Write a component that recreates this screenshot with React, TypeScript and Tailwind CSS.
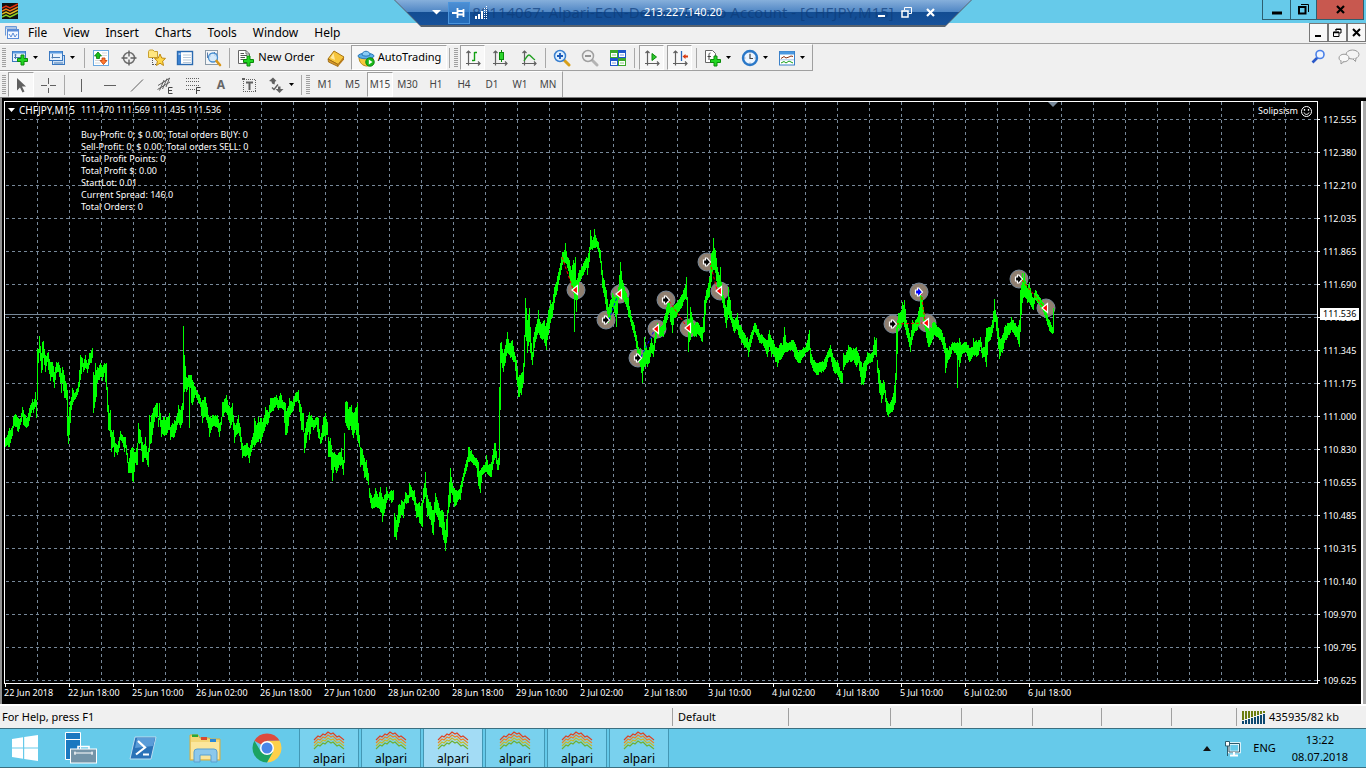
import React from 'react';

/* ------------------------------------------------------------------ */
/* Market data: [x, high, low] key samples, one bar per pixel between  */
/* ------------------------------------------------------------------ */

const SAMPLES = `5,438,447 7,435,445 9,428,447 12,426,436 13,417,428 15,414,427 18,418,432 20,418,425 22,407,417 23,410,425 26,418,428 28,413,426 30,405,417 32,399,410 33,402,413 35,392,407 36,400,418 37,349,400 38,349,363 39,336,353 41,353,373 42,342,370 43,341,358 45,355,372 47,353,362 48,352,370 50,362,381 52,362,377 54,372,388 56,362,373 58,362,372 60,368,383 61,373,393 62,367,383 64,375,398 66,383,400 67,390,436 68,417,444 69,407,435 71,397,410 72,388,405 74,393,400 77,388,395 78,382,392 80,355,380 82,358,367 83,363,372 85,355,368 87,363,373 89,353,365 91,350,363 92,348,358 93,372,413 95,363,402 96,370,397 97,367,383 100,363,377 102,367,381 104,363,373 106,363,390 107,387,412 108,405,430 110,410,437 111,430,452 113,430,447 114,437,457 115,443,452 117,445,455 119,437,448 120,431,440 122,435,443 124,437,452 125,437,448 127,453,463 128,462,473 130,450,473 132,447,481 133,448,482 135,452,463 137,443,465 138,423,443 140,430,443 142,442,462 143,445,462 145,437,458 147,452,465 148,448,467 149,415,452 151,415,443 153,408,428 155,405,417 157,403,417 158,418,427 159,403,420 161,420,437 163,417,435 166,417,435 168,417,430 169,413,430 170,427,440 172,423,437 174,420,437 176,417,430 178,405,423 180,410,428 182,403,423 183,326,410 184,355,392 186,377,392 188,375,387 189,375,428 190,375,388 191,375,403 192,380,405 195,387,395 197,392,400 200,398,407 202,400,423 204,397,417 205,397,417 207,407,423 209,417,437 212,415,427 215,415,427 217,415,428 219,423,437 221,417,425 222,402,417 225,398,412 226,395,413 228,405,420 230,408,428 232,403,422 234,423,443 236,423,435 238,415,433 240,427,442 242,443,458 245,445,457 247,443,455 249,448,463 251,440,452 253,433,445 254,418,447 257,423,442 258,417,442 260,418,443 263,418,433 265,407,427 268,412,423 270,398,413 273,398,411 276,395,405 278,400,410 280,393,408 283,402,410 285,403,435 287,408,433 289,398,417 292,402,412 295,393,402 298,390,403 299,400,412 301,407,430 303,413,432 304,433,453 306,422,443 308,415,432 309,412,440 311,415,427 313,420,430 316,417,425 318,418,438 320,437,444 321,433,443 323,417,437 325,413,438 327,422,435 328,437,457 330,438,457 332,452,481 334,452,467 336,455,473 339,452,465 341,448,465 343,460,475 344,433,463 345,402,423 347,402,428 349,407,430 351,405,430 353,413,438 355,408,430 357,403,440 359,435,447 360,447,467 362,450,465 364,458,478 366,460,480 368,473,485 369,488,498 371,495,508 373,497,508 375,488,507 378,497,508 380,487,512 382,497,522 384,495,513 386,487,503 388,494,498 391,490,503 393,490,500 394,513,537 396,520,540 398,505,527 401,500,515 403,502,518 405,492,503 408,495,503 409,483,498 411,487,497 414,490,505 416,503,518 418,503,517 419,502,523 422,500,527 423,488,503 425,472,497 427,495,517 430,502,520 432,510,533 433,510,535 435,493,513 437,500,517 439,508,527 441,510,528 443,512,540 445,530,551 447,510,537 448,495,513 450,468,503 451,477,493 454,488,507 456,490,505 458,490,500 460,485,500 462,477,487 464,468,477 467,457,467 468,447,462 471,450,462 473,455,465 476,458,468 478,462,486 480,470,493 482,467,475 484,465,473 486,455,472 488,465,475 491,462,477 492,455,470 494,443,460 495,443,458 497,460,470 498,458,470 499,387,465 500,343,410 501,342,363 503,353,372 505,345,363 507,332,353 509,343,355 512,340,360 514,352,362 516,360,380 518,377,397 521,373,395 523,363,383 524,335,367 525,298,337 527,320,353 529,308,342 530,327,353 532,352,365 533,337,357 535,327,342 538,310,333 540,322,338 542,323,340 544,320,343 546,323,350 548,310,335 550,300,323 552,302,317 554,287,303 556,282,295 558,272,285 560,263,275 562,252,265 563,252,262 565,243,263 567,257,268 569,260,278 571,270,287 573,260,293 574,263,332 575,257,300 576,280,312 578,273,292 579,270,282 581,267,278 583,263,275 586,257,268 587,258,275 589,247,262 590,230,250 592,240,250 594,229,248 596,238,247 598,242,252 600,250,263 602,270,288 604,280,297 606,290,310 608,307,323 610,300,320 612,293,307 615,297,317 616,293,327 618,287,300 619,275,298 620,262,292 622,280,298 624,287,302 627,297,310 628,298,317 630,310,322 632,320,330 634,325,337 636,335,348 638,347,360 640,348,367 642,358,383 644,337,367 647,350,367 649,347,363 651,338,353 653,345,357 655,330,343 657,323,333 660,327,337 663,320,337 665,313,330 667,302,320 669,300,313 670,308,322 672,307,333 674,305,318 676,303,317 678,300,312 681,295,308 683,290,302 684,288,300 686,277,300 687,297,327 688,320,352 690,307,340 692,317,333 694,325,337 696,322,337 698,323,335 700,327,338 702,327,342 704,300,332 706,290,303 708,283,298 709,277,297 711,253,282 713,238,270 715,250,273 717,267,287 719,275,292 720,267,292 722,290,303 724,298,317 726,307,328 728,287,315 730,300,320 732,317,327 734,320,333 737,313,330 738,320,335 741,327,343 744,333,348 747,337,350 748,342,357 751,332,343 754,323,332 756,325,335 759,333,343 762,335,343 764,338,348 767,340,357 769,330,347 771,338,357 773,340,355 775,347,362 777,348,367 780,343,360 782,345,357 784,327,353 786,342,352 789,342,350 792,340,350 794,342,357 797,350,362 800,350,363 803,347,357 805,347,353 807,340,352 809,330,350 810,348,363 812,357,368 815,362,373 817,363,375 820,362,372 823,362,372 826,355,367 828,350,358 830,345,357 832,353,367 834,358,373 837,360,375 839,367,380 842,373,383 843,353,370 845,355,365 848,345,362 851,348,362 853,348,360 856,347,367 858,353,363 861,362,385 863,363,385 865,360,378 867,352,365 869,353,363 872,352,362 874,337,355 876,338,357 877,360,373 879,370,393 881,383,403 883,380,395 884,382,393 886,398,412 888,403,417 891,400,412 893,393,410 895,373,403 896,327,380 898,313,328 900,312,328 902,302,323 904,300,327 906,320,335 908,328,342 910,337,352 912,320,340 914,323,333 917,317,330 919,307,325 920,290,317 922,297,317 924,313,327 926,323,338 928,328,347 930,327,345 932,323,340 934,322,335 937,327,337 939,328,340 941,330,342 944,337,353 945,343,373 947,348,363 950,347,357 952,342,350 955,343,353 956,343,355 957,342,388 958,343,360 959,338,367 961,345,357 963,343,353 966,342,353 969,348,362 972,347,357 973,338,355 976,340,357 978,340,355 980,337,347 982,348,358 984,347,357 986,328,367 988,327,342 990,327,340 992,320,333 994,299,322 995,310,322 997,317,338 999,337,359 1002,335,353 1004,327,343 1007,323,338 1009,323,335 1011,317,330 1013,320,333 1015,323,337 1017,327,340 1019,320,347 1020,290,332 1022,273,303 1024,273,297 1027,288,303 1029,283,303 1031,293,307 1033,298,310 1035,290,300 1038,295,303 1040,298,307 1043,303,312 1045,310,318 1047,315,325 1050,322,332 1052,327,334 1053,308,333`
  .split(/\s+/)
  .map((s) => s.split(',').map(Number));

function buildBars(): string {
  let seed = 17;
  const rnd = () => {
    seed = (seed * 1103515245 + 12345) % 2147483648;
    return seed / 2147483648;
  };
  const out: string[] = [];
  for (let i = 0; i < SAMPLES.length; i++) {
    const [x, hi, lo] = SAMPLES[i];
    out.push(`M${x} ${hi}V${lo}`);
    const next = SAMPLES[i + 1];
    if (!next) break;
    for (let px = x + 1; px < next[0]; px++) {
      const t = (px - x) / (next[0] - x);
      const h = hi + (next[1] - hi) * t;
      const l = lo + (next[2] - lo) * t;
      const span = l - h;
      const top = Math.round(h - 1 + rnd() * span * 0.25);
      const bottom = Math.round(l + 1 - rnd() * span * 0.2);
      out.push(`M${px} ${top}V${bottom}`);
    }
  }
  return out.join('');
}

const BARS = buildBars();

const PRICES = ['112.555', '112.380', '112.210', '112.035', '111.865', '111.690', '111.520', '111.345', '111.175', '111.000', '110.830', '110.655', '110.485', '110.315', '110.140', '109.970', '109.795', '109.625'];
const TIMES = ['22 Jun 2018', '22 Jun 18:00', '25 Jun 10:00', '26 Jun 02:00', '26 Jun 18:00', '27 Jun 10:00', '28 Jun 02:00', '28 Jun 18:00', '29 Jun 10:00', '2 Jul 02:00', '2 Jul 18:00', '3 Jul 10:00', '4 Jul 02:00', '4 Jul 18:00', '5 Jul 10:00', '6 Jul 02:00', '6 Jul 18:00'];
const STATS = ['Buy-Profit: 0; $ 0.00; Total orders BUY: 0', 'Sell-Profit: 0; $ 0.00; Total orders SELL: 0', 'Total Profit Points: 0', 'Total Profit $: 0.00', 'StartLot: 0.01', 'Current Spread: 146.0', 'Total Orders: 0'];

type Kind = 'exit' | 'entry' | 'buy';
const MARKERS: [number, number, Kind][] = [
  [576, 290, 'exit'], [606, 320, 'entry'], [620, 294, 'exit'], [638, 358, 'entry'], [657, 329, 'exit'],
  [666, 300, 'entry'], [689, 328, 'exit'], [707, 262, 'entry'], [720, 291, 'exit'], [893, 324, 'entry'],
  [919, 292, 'buy'], [927, 323, 'exit'], [1019, 279, 'entry'], [1046, 308, 'exit'],
];
const LINKS: [number, number, number, number, string][] = [
  [562, 257, 573, 289, '#f00'], [609, 320, 617, 297, '#00f'], [641, 357, 654, 331, '#00f'], [669, 301, 687, 327, '#f00'],
  [710, 262, 717, 290, '#f00'], [896, 324, 924, 323, '#f00'], [921, 292, 925, 321, '#f00'], [1022, 280, 1043, 306, '#f00'],
];

function Marker({ x, y, kind }: { x: number; y: number; kind: Kind }) {
  return (
    <g transform={`translate(${x} ${y})`}>
      {kind === 'exit' ? (
        <path d="M-4 0L1.500 -4.500V4.500Z" fill="#f00" stroke="#fff" strokeWidth="1.200" />
      ) : (
        <path d="M-3.500 -2H-1.500V-4H0L3.500 0L0 4H-1.500V2H-3.500Z" fill={kind === 'buy' ? '#00f' : '#000'} stroke="#fff" strokeWidth="1.200" />
      )}
    </g>
  );
}

/* Plot coordinates are window pixels; the group shifts them into the frame. */
function Plot() {
  const cols = Array.from({ length: 60 }, (_, i) => 37 + i * 32);
  const rows = Array.from({ length: 30 }, (_, i) => 119 + i * 33);
  return (
    <svg className="block h-full w-full" aria-label="CHFJPY M15 chart">
      <g transform="translate(-5 -102)">
        <g stroke="#778899" strokeDasharray="3 3" shapeRendering="crispEdges">
          {cols.map((x) => (
            <line key={x} x1={x + 0.5} x2={x + 0.5} y1="102" y2="1600" />
          ))}
          {rows.map((y) => (
            <line key={y} x1="6" x2="2600" y1={y + 0.5} y2={y + 0.5} />
          ))}
        </g>
        <path d="M5 314.500H2600" stroke="#778899" shapeRendering="crispEdges" />
        <path d="M1048 102H1058L1053 107Z" fill="#778899" />
        {MARKERS.map(([x, y]) => (
          <circle key={x} cx={x} cy={y} r="9" fill="#8f7f70" stroke="#778899" />
        ))}
        <path d={BARS} transform="translate(0.5 0)" stroke="#0f0" fill="none" shapeRendering="crispEdges" />
        {LINKS.map(([x1, y1, x2, y2, c]) => (
          <line key={x1} x1={x1} y1={y1} x2={x2} y2={y2} stroke={c} strokeDasharray="3 2" />
        ))}
        {MARKERS.map(([x, y, k]) => (
          <Marker key={x} x={x} y={y} kind={k} />
        ))}
      </g>
    </svg>
  );
}

/* ------------------------------- icons ------------------------------ */

function Svg({ w = 18, h = 18, children }: { w?: number; h?: number; children: React.ReactNode }) {
  return (
    <svg width={w} height={h} viewBox={`0 0 ${w} ${h}`} fill="none" aria-hidden="true" className="shrink-0">
      {children}
    </svg>
  );
}

const Plus = ({ x, y }: { x: number; y: number }) => (
  <path d={`M${x + 4} ${y + 0.5}h3v3.5h3.500v3h-3.500v3.500h-3v-3.500h-3.500v-3h3.500z`} fill="#22d622" stroke="#0a8a0a" strokeWidth="1" />
);
const Caret = () => (
  <Svg w={7} h={4}><path d="M1 0H6L3.500 3Z" fill="#000" /></Svg>
);

const NewChart = () => (
  <Svg>
    <rect x="1.500" y="2.500" width="13" height="10" fill="#e8f2fc" stroke="#3a78c0" />
    <path d="M2 3.500H14" stroke="#5a9be0" strokeWidth="2" />
    <path d="M4.500 5V10M3 8.500H12M3.500 6h2" stroke="#4a7ab0" />
    <Plus x={6} y={5.500} />
  </Svg>
);
const Profiles = () => (
  <Svg>
    <rect x="4.500" y="6.500" width="12" height="9" fill="#cfe2f7" stroke="#3a78c0" />
    <rect x="1.500" y="2.500" width="13" height="9" fill="#e8f2fc" stroke="#3a78c0" />
    <path d="M2 3.500H14" stroke="#5a9be0" strokeWidth="2" />
    <path d="M4.500 5V9.500M3.500 8.500H12M6 14h9" stroke="#4a7ab0" />
  </Svg>
);
const MarketWatch = () => (
  <Svg>
    <rect x="1.500" y="1.500" width="15" height="15" fill="#fff" stroke="#6aa8e0" />
    <path d="M10 4H15M10 6.500H15M3 11.500H8M3 14H8" stroke="#d8d8d8" />
    <path d="M6 3L9.500 7H7.500V9.500H4.500V7H2.500Z" fill="#18c018" stroke="#0a7a0a" strokeWidth=".8" />
    <path d="M11.500 15.500L15 11.500H13V9H10V11.500H8Z" fill="#ff7a30" stroke="#c03a00" strokeWidth=".8" />
  </Svg>
);
const Target = () => (
  <Svg>
    <circle cx="9" cy="9" r="5.500" stroke="#707070" strokeWidth="1.500" />
    <path d="M9 1.500V7.500M9 10.500V16.500M1.500 9H7.500M10.500 9H16.500" stroke="#606060" strokeWidth="1.400" />
  </Svg>
);
const Navigator = () => (
  <Svg>
    <path d="M.5 2.500L1.500 1H5L6.500 2.500H9.500V8.500H.5Z" fill="#ffe680" stroke="#c8a030" />
    <path d="M4.500 9V16M5 15.500H9" stroke="#555" strokeDasharray="1 1" />
    <path d="M12 5L13.700 9L17.500 9.400L14.600 12.200L15.500 16.500L12 14.200L8.500 16.500L9.400 12.200L6.500 9.400L10.300 9Z" fill="#ffd84a" stroke="#c08a10" />
  </Svg>
);
const Terminal = () => (
  <Svg>
    <rect x="1.500" y="2.500" width="15" height="13" fill="#fff" stroke="#2a6ab0" strokeWidth="1.400" />
    <rect x="2" y="3" width="3" height="12" fill="#3a80d0" />
    <path d="M7 6H15M7 8.500H15M7 11H15M7 13.500H15" stroke="#b8c8d8" />
    <path d="M2.500 5H4.500" stroke="#fff" />
  </Svg>
);
const Tester = () => (
  <Svg>
    <rect x="1.500" y="1.500" width="12" height="14" fill="#f4f6f8" stroke="#8a9aa8" />
    <path d="M3.500 3.500V9M6.500 4V8M10.500 3V7M12 4V8" stroke="#5a7aa8" />
    <circle cx="9" cy="8.500" r="4.500" fill="#cfe8fb" fillOpacity=".85" stroke="#4a90d0" strokeWidth="1.300" />
    <path d="M12.500 12L16 16" stroke="#d8961a" strokeWidth="2.600" strokeLinecap="round" />
  </Svg>
);
const NewOrder = () => (
  <Svg>
    <path d="M1.500 1.500H9L12.500 5V14.500H1.500Z" fill="#fff" stroke="#666" />
    <path d="M9 1.500V5H12.500" stroke="#666" />
    <path d="M3.500 4.500H7M3.500 6.500H10M3.500 8.500H8M3.500 10.500H7" stroke="#555" />
    <Plus x={6} y={6.500} />
  </Svg>
);
const Book = () => (
  <Svg>
    <path d="M1 10L7 2L17 8L11 15.500Z" fill="#f6c53c" stroke="#a87410" />
    <path d="M1 10L1.500 13L11 17.500V15.500Z" fill="#d8982a" stroke="#96640c" strokeWidth=".8" />
    <path d="M11 15.500L17 8V10.500L11 17.500" fill="#b87a18" />
    <path d="M6.500 4L3.500 9L8 11Z" fill="#ffe9a0" />
  </Svg>
);
const AutoIcon = () => (
  <Svg>
    <path d="M2 8C2 14 6 17 10 17S16 12 16 9Z" fill="#f7c93a" stroke="#b88a18" />
    <ellipse cx="9" cy="7" rx="8" ry="2.800" fill="#5aaee8" stroke="#2a78b8" />
    <path d="M5 6C5 1 13 1 13 6C11 7.500 7 7.500 5 6Z" fill="#8accf5" stroke="#2a78b8" />
    <circle cx="13" cy="13" r="4.300" fill="#18b818" stroke="#0a7a0a" strokeWidth=".8" />
    <path d="M11.800 10.500V15.500L15.500 13Z" fill="#fff" />
  </Svg>
);
const Axes = () => (
  <path d="M4.500 2V16.500M2 14.500H16M2.500 4L4.500 2L6.500 4M14 12.500L16 14.500L14 16.500" stroke="#606060" strokeWidth="1.200" />
);
const BarIcon = () => (
  <Svg><Axes /><path d="M10.500 3V12M10.500 3.500H13M8 11.500H10.500" stroke="#12a012" strokeWidth="1.400" /></Svg>
);
const CandleIcon = () => (
  <Svg><Axes /><path d="M10.500 1V13" stroke="#0a8a0a" /><rect x="8.500" y="3.500" width="4" height="7" fill="#2cd62c" stroke="#0a8a0a" /></Svg>
);
const LineIcon = () => (
  <Svg><Axes /><path d="M4 12C6 9 7.500 6 9 6S12 9 15 11" stroke="#22a022" strokeWidth="1.300" /></Svg>
);
const Zoom = ({ on }: { on: boolean }) => (
  <Svg>
    <path d="M11 11L16 16" stroke={on ? '#d8a01a' : '#b4b4b4'} strokeWidth="3" strokeLinecap="round" />
    <circle cx="7" cy="7" r="5.500" fill={on ? '#dff0ff' : '#f0f0f0'} stroke={on ? '#3a80d0' : '#a0a0a0'} strokeWidth="1.500" />
    <path d={on ? 'M4 7H10M7 4V10' : 'M4 7H10'} stroke={on ? '#1a5ab8' : '#888'} strokeWidth="1.800" />
  </Svg>
);
const Pane = ({ x, y, c }: { x: number; y: number; c: string }) => (
  <g transform={`translate(${x} ${y})`}>
    <rect width="8" height="8" fill={c} />
    <path d="M1 3H7V7H1Z" fill="#fff" />
    <path d="M2 5H6" stroke={c} strokeOpacity=".6" />
  </g>
);
const Tile = () => (
  <Svg>
    <Pane x={1} y={1} c="#3aa82a" />
    <Pane x={9} y={1} c="#1f58cc" />
    <Pane x={1} y={9} c="#1f58cc" />
    <Pane x={9} y={9} c="#3aa82a" />
  </Svg>
);
const ScrollIcon = () => (
  <Svg><Axes /><path d="M9 4.500L13.500 8L9 11.500Z" fill="#2cc82c" stroke="#0a8a0a" /></Svg>
);
const ShiftIcon = () => (
  <Svg><Axes /><path d="M10.500 2V12" stroke="#2a68b8" strokeWidth="1.300" /><path d="M11.500 7.500L14.500 5V6.500H17V8.500H14.500V10Z" fill="#d83a10" /></Svg>
);
const IndicatorIcon = () => (
  <Svg>
    <path d="M1.500 1.500H8.500L11.500 4.500V13.500H1.500Z" fill="#fff" stroke="#666" />
    <path d="M6.500 4C5 4 5 5 5 6V11M3.500 7.500H7" stroke="#444" />
    <Plus x={6} y={6.500} />
  </Svg>
);
const ClockIcon = () => (
  <Svg>
    <circle cx="9" cy="9" r="7" fill="#eef6ff" stroke="#2a78c8" strokeWidth="2.400" />
    <path d="M9 5V9.500H12" stroke="#444" strokeWidth="1.200" />
    <path d="M9 3.500v.8M9 13.700v.8M3.500 9h.8M13.700 9h.8" stroke="#667" />
  </Svg>
);
const TemplateIcon = () => (
  <Svg>
    <rect x="1.500" y="2.500" width="15" height="13.500" fill="#fff" stroke="#3a80c8" />
    <path d="M2 4H16" stroke="#4a98e0" strokeWidth="3" />
    <path d="M3 9.500L6 7.500L8 9L11 8L13 7L15 7.500" stroke="#8a3010" />
    <path d="M3 14L6 12.500L8 14L11 12L15 14" stroke="#18a018" />
    <path d="M2 10.800H16" stroke="#a8c8e8" />
  </Svg>
);

const P = '#606060';
const Arrow = () => (<Svg><path d="M5 2L14 10.500H10L12.500 15.500L10.500 16.500L8 11.500L5 14.500Z" fill={P} /></Svg>);
const Cross = () => (<Svg><path d="M9.500 1.500V7.500M9.500 11.500V17M2 9.500H8M11 9.500H17" stroke={P} shapeRendering="crispEdges" /></Svg>);
const VLine = () => (<Svg><path d="M9.500 3V16" stroke={P} shapeRendering="crispEdges" /></Svg>);
const HLine = () => (<Svg><path d="M4 9.500H16" stroke={P} shapeRendering="crispEdges" /></Svg>);
const Trend = () => (<Svg><path d="M3 15.500L15 3.500" stroke={P} /></Svg>);
const Channel = () => (
  <Svg>
    <path d="M2 9.500L14 2M1.500 13.500L14 6M3.500 14.500L8 4M6.500 13L11 2.500M10 11L13.500 2" stroke={P} />
    <path d="M16.500 11.500H12.500V17.500H16.500M12.500 14.500H16" stroke="#444" />
  </Svg>
);
const Fibo = () => (
  <Svg>
    <path d="M2 2.500H16M2 5.500H16M2 9.500H16M2 13.500H11" stroke={P} strokeDasharray="1 1" shapeRendering="crispEdges" />
    <path d="M16.500 11.500H12.500V18M12.500 14.500H16" stroke="#444" />
  </Svg>
);
const LabelIcon = () => (
  <Svg>
    <rect x="3.500" y="3.500" width="12" height="12" stroke={P} strokeDasharray="1 1" shapeRendering="crispEdges" />
    <path d="M6 6.500H13M9.500 6.500V14" stroke={P} strokeWidth="2" />
    <path d="M2 2h3v2h-3z" fill={P} />
  </Svg>
);
const Arrows = () => (
  <Svg>
    <path d="M2 5L6 1.500L9.500 5L8 5.500L7.500 8.500L5 7.500L4.500 5.500Z" fill={P} />
    <path d="M5 11.500L7 13.500L11 8.500" stroke={P} strokeWidth="1.400" />
    <path d="M8.500 13L11 13V10.500H13.500V13L16.500 13L12.500 17Z" fill={P} />
  </Svg>
);

const AppLogo = () => (
  <Svg w={16} h={16}>
    <rect width="16" height="16" fill="#111" />
    {['#e03010', '#f07818', '#e0b820', '#8ad020'].map((c, i) => (
      <path key={c} d={`M0 ${5 + i * 3}L4 ${3 + i * 3}L8 ${5 + i * 3}L12 ${3 + i * 3}L16 ${1 + i * 3}`} stroke={c} strokeWidth="1.500" />
    ))}
  </Svg>
);
const DocLogo = () => (
  <Svg w={16} h={16}>
    <path d="M1.500 10.500V1.500H12.500V4M1 3H13" stroke="#6a98d8" />
    <rect x="3.500" y="4.500" width="11" height="9" fill="#f4f8ff" stroke="#5a8cd8" />
    <path d="M4 5.500H14" stroke="#5a8cd8" strokeWidth="2" />
    <path d="M5 9L7 12L9 8L11 12L13 9" stroke="#5a8cd8" />
  </Svg>
);

/* ------------------------------ toolbars ---------------------------- */

function Tool({ label, w = 'w-7', on, children }: { label: string; w?: string; on?: boolean; children: React.ReactNode }) {
  const look = on ? 'bg-[#f8f8f8] border-[#a0a0a0] border-r-white border-b-white' : 'border-transparent';
  return (
    <button type="button" aria-label={label} className={`flex h-full ${w} shrink-0 items-center justify-center gap-[3px] border ${look}`}>
      {children}
    </button>
  );
}
const Sep = () => <span className="mx-[2px] h-5 w-px shrink-0 bg-[#a8a8a8]" />;
const Grip = () => (
  <span className="mx-[2px] flex h-5 w-1 shrink-0 flex-col justify-between">
    {Array.from({ length: 10 }, (_, i) => (
      <span key={i} className="h-px bg-[#a0a0a0]" />
    ))}
  </span>
);

function StandardBar() {
  return (
    <div className="flex h-[27px] w-max items-center border-t border-r border-b border-t-white border-r-[#a0a0a0] border-b-[#a0a0a0] pr-[2px]">
      <Grip />
      <Tool label="New chart" w="w-[34px]"><NewChart /><Caret /></Tool>
      <Tool label="Profiles" w="w-10"><Profiles /><Caret /></Tool>
      <Sep />
      <Tool label="Market Watch"><MarketWatch /></Tool>
      <Tool label="Data Window"><Target /></Tool>
      <Tool label="Navigator"><Navigator /></Tool>
      <Tool label="Terminal"><Terminal /></Tool>
      <Tool label="Strategy Tester"><Tester /></Tool>
      <Sep />
      <Tool label="New Order" w="w-[88px]"><NewOrder /><span className="text-[11px]">New Order</span></Tool>
      <Tool label="MetaEditor" w="w-[31px]"><Book /></Tool>
      <Tool label="AutoTrading" w="w-24" on><AutoIcon /><span className="text-[11px]">AutoTrading</span></Tool>
      <Sep />
      <Grip />
      <Tool label="Bar Chart" w="w-[25px]" on><BarIcon /></Tool>
      <Tool label="Candlesticks" w="w-[30px]"><CandleIcon /></Tool>
      <Tool label="Line Chart"><LineIcon /></Tool>
      <Sep />
      <Tool label="Zoom In"><Zoom on /></Tool>
      <Tool label="Zoom Out"><Zoom on={false} /></Tool>
      <Tool label="Tile Windows"><Tile /></Tool>
      <Sep />
      <span className="flex h-full gap-[3px] px-[2px]">
        <Tool label="Auto Scroll" w="w-[25px]" on><ScrollIcon /></Tool>
        <Tool label="Chart Shift" w="w-[25px]" on><ShiftIcon /></Tool>
      </span>
      <Sep />
      <Tool label="Indicators" w="w-[37px]"><IndicatorIcon /><Caret /></Tool>
      <Tool label="Periods" w="w-[37px]"><ClockIcon /><Caret /></Tool>
      <Tool label="Templates" w="w-[37px]"><TemplateIcon /><Caret /></Tool>
    </div>
  );
}

function LineBar() {
  return (
    <div className="flex h-[26px] w-max items-center border-t border-r border-t-white border-r-[#a0a0a0] text-[10px] text-[#444]">
      <Grip />
      <Tool label="Cursor" w="w-[26px]" on><Arrow /></Tool>
      <Tool label="Crosshair"><Cross /></Tool>
      <Sep />
      <Tool label="Vertical Line"><VLine /></Tool>
      <Tool label="Horizontal Line"><HLine /></Tool>
      <Tool label="Trendline"><Trend /></Tool>
      <Tool label="Equidistant Channel"><Channel /></Tool>
      <Tool label="Fibonacci"><Fibo /></Tool>
      <Tool label="Text"><span className="text-[12px] font-bold text-[#666]">A</span></Tool>
      <Tool label="Text Label"><LabelIcon /></Tool>
      <Tool label="Arrows" w="w-9"><Arrows /><Caret /></Tool>
      <Sep />
      <Grip />
      <Tool label="M1" w="w-[26px]">M1</Tool>
      <Tool label="M5" w="w-[29px]">M5</Tool>
      <Tool label="M15" w="w-[26px]" on>M15</Tool>
      <Tool label="M30" w="w-[29px]">M30</Tool>
      <Tool label="H1">H1</Tool>
      <Tool label="H4">H4</Tool>
      <Tool label="D1">D1</Tool>
      <Tool label="W1">W1</Tool>
      <Tool label="MN">MN</Tool>
    </div>
  );
}

/* ------------------------------ title bar --------------------------- */

function RemoteBar() {
  return (
    <div className="absolute top-0 left-1/2 z-10 h-[27px] w-[578px] -translate-x-1/2 bg-[#59636e] [clip-path:polygon(0_0,100%_0,calc(100%-27px)_100%,27px_100%)]">
      <div className="relative mx-px flex h-[25px] items-center bg-[linear-gradient(#86afdb_0,#4f86c4_12px,#124c92_12px,#17529b_100%)] pr-[31px] pl-[31px] [clip-path:polygon(0_0,100%_0,calc(100%-25px)_100%,25px_100%)]">
        <span className="absolute inset-0 flex items-center justify-center text-[15px] whitespace-nowrap text-[#0d3c7a]/70">80114067: Alpari-ECN-Demo - Demo Account - [CHFJPY,M15]</span>
        <button type="button" aria-label="Menu" className="flex h-6 w-5 items-center justify-center"><Svg w={9} h={5}><path d="M0 0H9L4.500 4.500Z" fill="#fff" /></Svg></button>
        <button type="button" aria-label="Pin" className="ml-[2px] flex h-[22px] w-[22px] items-center justify-center border border-[#4a94dc] bg-[#2f7fd0]/60">
          <Svg w={14} h={10}><path d="M0 5H5M5.500 0V10M6 3H11M6 6.500H11M11.500 1V9" stroke="#fff" strokeWidth="1.800" /></Svg>
        </button>
        <span className="relative ml-[5px]"><Svg w={13} h={13}><path d="M1 10V13M4 8V13M7 5V13" stroke="#fff" strokeWidth="2" /><path d="M9.500 2V13M11.500 0V13" stroke="#fff" strokeDasharray="1 1" /></Svg></span>
        <span className="absolute inset-0 flex items-center justify-center text-[11px] text-white">213.227.140.20</span>
        <span className="relative ml-auto flex items-center gap-1">
          <button type="button" aria-label="Minimize session" className="flex h-5 w-5 items-center justify-center"><Svg w={8} h={10}><path d="M0 8H7" stroke="#fff" strokeWidth="2" /></Svg></button>
          <button type="button" aria-label="Restore session" className="flex h-5 w-5 items-center justify-center"><Svg w={11} h={11}><path d="M3.500 3V.5H10.500V6.500H8" stroke="#fff" /><rect x="1" y="4" width="6" height="6" stroke="#fff" strokeWidth="1.500" /></Svg></button>
          <button type="button" aria-label="Close session" className="flex h-5 w-5 items-center justify-center"><Svg w={9} h={9}><path d="M1 1L8 8M8 1L1 8" stroke="#fff" strokeWidth="2.200" /></Svg></button>
        </span>
      </div>
    </div>
  );
}

function TitleBar() {
  return (
    <header className="relative flex h-[23px] items-start bg-[#66caea] pr-[2px]">
      <span className="mt-[3px] ml-[2px]"><AppLogo /></span>
      <RemoteBar />
      <div className="ml-auto flex h-5 border-x border-b border-[#2d5f70]">
        <button type="button" aria-label="Minimize" className="flex w-7 items-center justify-center border-r border-[#2d5f70]"><Svg w={10} h={10}><path d="M0 8H10" stroke="#000" strokeWidth="3" /></Svg></button>
        <button type="button" aria-label="Restore" className="flex w-[26px] items-center justify-center border-r border-[#2d5f70]"><Svg w={11} h={11}><path d="M3 .5H10.500V8" stroke="#000" /><rect x="1" y="3" width="6.500" height="6.500" stroke="#000" strokeWidth="2" /></Svg></button>
        <button type="button" aria-label="Close" className="flex w-[46px] items-center justify-center bg-[#c8584f]"><Svg w={9} h={9}><path d="M1 1L8 8M8 1L1 8" stroke="#000" strokeWidth="2.200" /></Svg></button>
      </div>
    </header>
  );
}

function MenuBar() {
  const box = 'flex h-[19px] w-[19px] items-center justify-center border border-[#777] bg-[#f8f8f8]';
  return (
    <nav className="flex h-[21px] items-start border-b border-[#a0a0a0] bg-[#f0f0f0] pl-[4px] text-[12px] leading-5">
      <span className="mt-[2px] mr-2"><DocLogo /></span>
      <div className="flex gap-4">
        {['File', 'View', 'Insert', 'Charts', 'Tools', 'Window', 'Help'].map((m) => (
          <button type="button" key={m}>{m}</button>
        ))}
      </div>
      <div className="ml-auto flex">
        <button type="button" aria-label="Minimize chart" className={box}><Svg w={9} h={9}><path d="M1 8H7" stroke="#000" strokeWidth="2" /></Svg></button>
        <button type="button" aria-label="Restore chart" className={box}><Svg w={9} h={9}><path d="M3 3V1H8V5H6.500M2.500 1.500H8" stroke="#000" /><path d="M.5 4H6V8.500H.5Z" stroke="#000" /><path d="M.5 4.500H6" stroke="#000" strokeWidth="1.500" /></Svg></button>
        <button type="button" aria-label="Close chart" className={box}><Svg w={9} h={9}><path d="M1 1L8 8M8 1L1 8" stroke="#000" strokeWidth="2" /></Svg></button>
      </div>
    </nav>
  );
}

/* ------------------------------- chart ------------------------------ */

function ChartWindow() {
  return (
    <main className="flex flex-1 border-t border-l-2 border-t-[#7c7c7c] border-l-[#909090] bg-black pt-[3px] pl-[2px] text-[9px] leading-3 text-white">
      <div className="flex min-w-0 flex-1 flex-col">
        <div className="relative min-h-[583px] flex-1 border border-white">
          <div className="absolute inset-0"><Plot /></div>
          <div className="relative flex items-start justify-between pt-[2px] pr-[5px] pl-[2px]">
            <div className="flex items-center gap-[3px]">
              <Svg w={9} h={5}><path d="M1 0H8L4.500 4Z" fill="#fff" /></Svg>
              <span className="text-[10px] leading-3">CHFJPY,M15</span>
              <span className="pl-[3px]">111.470 111.569 111.435 111.536</span>
            </div>
            <div className="flex items-center gap-[3px] pt-px">
              Solipsism
              <Svg w={11} h={11}><circle cx="5.500" cy="5.500" r="5" stroke="#fff" /><path d="M3 6.500C4 9 7 9 8 6.500" stroke="#fff" /><path d="M3.500 3v1.800M7.500 3v1.800" stroke="#fff" strokeWidth="1.300" /></Svg>
            </div>
          </div>
          <div className="relative pt-3 pl-[76px]">
            {STATS.map((s) => <p key={s}>{s}</p>)}
          </div>
        </div>
        <div className="flex h-5 overflow-hidden">
          {TIMES.map((t) => (
            <div key={t} className="w-16 shrink-0 whitespace-nowrap">
              <div className="ml-px h-[3px] w-px bg-white" />
              {t}
            </div>
          ))}
        </div>
      </div>
      <div className="relative w-[43px] shrink-0 overflow-hidden pt-[2px]">
        {PRICES.map((p) => (
          <div key={p} className="flex h-[33px] items-center gap-[3px]">
            <span className="h-px w-[2px] bg-white" />
            {p}
          </div>
        ))}
        <div className="absolute top-[207px] left-[2px] w-[39px] bg-white pl-[3px] leading-3 text-black">111.536</div>
      </div>
      <div className="w-[5px] shrink-0 border-l-2 border-white bg-[#a9a9a9]" />
    </main>
  );
}

/* ------------------------- status bar and taskbar ------------------- */

function StatusBar() {
  const cell = 'h-[18px] shrink-0 border-l border-[#a0a0a0]';
  return (
    <footer className="flex h-6 items-center border-t-2 border-white bg-[#f0f0f0] text-[11px] leading-[18px]">
      <span className="flex-1 pl-[2px]">For Help, press F1</span>
      <span className={`${cell} w-[116px] pl-[5px]`}>Default</span>
      <span className={`${cell} w-[102px]`} />
      <span className={`${cell} w-[71px]`} />
      <span className={`${cell} w-[71px]`} />
      <span className={`${cell} w-[69px]`} />
      <span className={`${cell} w-[70px]`} />
      <span className={`${cell} w-[65px]`} />
      <span className={`${cell} flex w-[130px] items-center gap-[3px] pl-[5px]`}>
        <Svg w={24} h={13}>
          {Array.from({ length: 8 }, (_, i) => (
            <g key={i}>
              <rect x={i * 3} y="0" width="2" height={9 - i} fill="#6b7d10" />
              <rect x={i * 3} y={10 - i} width="2" height={3 + i} fill="#0c4870" />
            </g>
          ))}
        </Svg>
        435935/82 kb
      </span>
    </footer>
  );
}

const Alpari = () => (
  <Svg w={32} h={20}>
    {['#e04020', '#f08020', '#c8b828', '#70b030'].map((c, i) => {
      const y = 1 + i * 3;
      return (
        <path
          key={c}
          d={`M1 ${y + 8}L5 ${y + 4}L7 ${y + 5}L10 ${y + 2}L12 ${y + 3}L15 ${y}L18 ${y + 2}L20 ${y + 1}L24 ${y + 5}L26 ${y + 4}L31 ${y + 8}`}
          stroke={c}
          strokeWidth="1.100"
        />
      );
    })}
  </Svg>
);

function Taskbar() {
  return (
    <div className="flex h-10 items-stretch border-t border-b border-[#3b6f80] bg-[#66caea]">
      <button type="button" aria-label="Start" className="flex w-[50px] items-center justify-center">
        <Svg w={28} h={28}><path d="M1 5L12 3.300V13.500H1ZM13.200 3.100L27 1V13.500H13.200ZM1 14.600H12V24.700L1 23ZM13.200 14.600H27V27L13.200 24.900Z" fill="#fff" /></Svg>
      </button>
      <button type="button" aria-label="Server Manager" className="flex w-[62px] items-center justify-center">
        <Svg w={32} h={34}>
          <path d="M.5 1.500H15.500V28.500H.5Z" fill="#1a78c0" stroke="#fff" />
          <path d="M0 8.500H16" stroke="#fff" />
          <path d="M13 18V15.500H24V18" stroke="#fff" strokeWidth="1.600" />
          <rect x="5.500" y="18" width="26" height="14" fill="#7494a8" stroke="#fff" />
          <path d="M9 22H28M10 20.500V24M27 20.500V24" stroke="#fff" />
        </Svg>
      </button>
      <button type="button" aria-label="PowerShell" className="flex w-[62px] items-center justify-center">
        <Svg w={28} h={24}>
          <path d="M6 1H27L22 23H1Z" fill="#2a72b8" stroke="#bcdcf0" />
          <path d="M8 2H26L24 10L6 12Z" fill="#5a9cd8" />
          <path d="M9 5L16 11.500L7 18.500M14 18.500H20" stroke="#fff" strokeWidth="2.200" />
        </Svg>
      </button>
      <button type="button" aria-label="File Explorer" className="flex w-[62px] items-center justify-center">
        <Svg w={32} h={30}>
          <path d="M1 2H9L11 5H20L22 6H31V27H1Z" fill="#f3d778" stroke="#d8ac40" />
          <path d="M3 1.500H9V4H3Z" fill="#28a838" /><path d="M12 4H18V7H12Z" fill="#d84a30" /><path d="M21 6H27V9H21Z" fill="#2a88d8" />
          <path d="M2 9H30V26H2Z" fill="#fbe69c" />
          <path d="M5 29V19Q5 16 8 16H25Q28 16 28 19V29H22V22H11V29Z" fill="#8cc8ec" stroke="#5aa0d0" />
        </Svg>
      </button>
      <button type="button" aria-label="Chrome" className="flex w-[62px] items-center justify-center">
        <Svg w={30} h={30}>
          <path d="M15 15L2.400 7.800A14.500 14.500 0 0 1 27.600 7.800H15Z" fill="#dd4b3e" />
          <path d="M15 8L27.600 7.800A14.500 14.500 0 0 1 15 29.500L21 18.500Z" fill="#fdd04a" />
          <path d="M2.400 7.800A14.500 14.500 0 0 0 15 29.500L21.200 18.600L8.800 18.600Z" fill="#1ba261" />
          <circle cx="15" cy="15" r="7" fill="#fff" /><circle cx="15" cy="15" r="5.500" fill="#4a86e8" />
        </Svg>
      </button>
      <div className="ml-px flex gap-[2px]">
        {[0, 1, 2, 3, 4, 5].map((i) => (
          <button type="button" key={i} className={`flex w-[60px] flex-col items-center justify-between border-x border-[#4397b4] pt-[2px] pb-px text-[12px] leading-4 ${i === 2 ? 'bg-[#a3dcf5]' : 'bg-[#79d1ee]'}`}>
            <Alpari />
            alpari
          </button>
        ))}
      </div>
      <div className="ml-auto flex items-center pr-[18px] text-[11px]">
        <Svg w={8} h={5}><path d="M0 5L4 0L8 5Z" fill="#111" /></Svg>
        <span className="ml-3"><Svg w={18} h={17}>
          <path d="M6 3.500H16.500V12H6Z" fill="#66caea" stroke="#fff" strokeWidth="2.500" /><path d="M6 3.500H16.500V12H6Z" stroke="#2c5a6c" />
          <path d="M11 12V15M7 15.500H15" stroke="#fff" strokeWidth="2" />
          <path d="M4.500 6V16" stroke="#2c5a6c" /><path d="M2.500 1.500H6.500V6H2.500Z" fill="#fff" stroke="#2c5a6c" />
        </Svg></span>
        <span className="ml-3">ENG</span>
        <span className="ml-4 flex flex-col items-center leading-[17px]"><span>13:22</span><span>08.07.2018</span></span>
      </div>
    </div>
  );
}

export default function App() {
  return (
    <div className="flex min-h-screen flex-col bg-[#f0f0f0] font-['Noto_Sans',sans-serif] text-black">
      <TitleBar />
      <MenuBar />
      <div className="flex">
        <div>
          <StandardBar />
          <LineBar />
        </div>
        <div className="ml-auto flex items-start gap-3 pt-[5px] pr-[6px]">
          <button type="button" aria-label="Search"><Svg w={15} h={15}><path d="M7 8L1.500 13.500" stroke="#2a58c8" strokeWidth="2.600" /><circle cx="9" cy="5.500" r="4" fill="#eef4ff" stroke="#4a80e8" strokeWidth="1.600" /></Svg></button>
          <button type="button" aria-label="Chat">
            <Svg w={22} h={16}>
              <ellipse cx="14.500" cy="5.500" rx="6.500" ry="4.500" fill="#f4f4f4" stroke="#999" /><path d="M15 10L17.500 12.500L18 9" fill="#f4f4f4" stroke="#999" />
              <ellipse cx="6" cy="9" rx="5" ry="3.800" fill="#f8f8f8" stroke="#999" /><path d="M3 12V15L6 12.500" fill="#f8f8f8" stroke="#999" />
            </Svg>
          </button>
        </div>
      </div>
      <ChartWindow />
      <StatusBar />
      <Taskbar />
    </div>
  );
}
